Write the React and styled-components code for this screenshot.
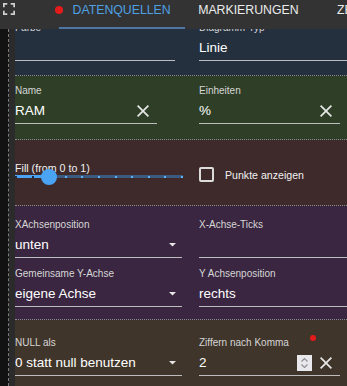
import React, { useLayoutEffect, useRef } from "react";
import styled, { createGlobalStyle } from "styled-components";

const GlobalStyle = createGlobalStyle`
  html, body {
    margin: 0;
    padding: 0;
    background: #121212;
  }
  body {
    font-family: "Liberation Sans", Arial, sans-serif;
    overflow: hidden;
  }
`;

const Screen = styled.div`
  width: 347px;
  height: 386px;
  display: flex;
  flex-direction: column;
  overflow: hidden;
  background: #121212;
`;

const TabBar = styled.div`
  height: 29px;
  flex-shrink: 0;
  display: flex;
  background: #333333;
  white-space: nowrap;
  overflow: hidden;
`;

const FullscreenButton = styled.div`
  width: 59px;
  flex-shrink: 0;
  box-sizing: border-box;
  padding: 3px 0 0 3px;
  color: #d0d0d0;

  svg {
    display: block;
  }
`;

const Tab = styled.div`
  position: relative;
  flex-shrink: 0;
  min-width: 76px;
  box-sizing: border-box;
  padding: 3px 14px 0 13.5px;
  text-align: center;
  font-size: 12.3px;
  line-height: 14px;
  text-transform: uppercase;
  color: ${(p) => (p.$active ? "#4ea1e4" : "#ececec")};
  border-bottom: 2px solid ${(p) => (p.$active ? "#4f75a3" : "transparent")};
`;

const Dot = styled.span`
  position: absolute;
  width: ${(p) => p.$size}px;
  height: ${(p) => p.$size}px;
  border-radius: 50%;
  background: #e41b1b;
  left: ${(p) => p.$left}px;
  top: ${(p) => p.$top}px;
`;

const Body = styled.div`
  flex: 1;
  min-height: 0;
  display: flex;
`;

const Gutter = styled.div`
  width: 8px;
  flex-shrink: 0;
  background: #121212;
  border-right: 1px dashed #7c7c7c;
`;

const Rail = styled.div`
  width: 6px;
  flex-shrink: 0;
  background: #2b2b2b;
`;

const Scroller = styled.div`
  flex: 1;
  min-width: 0;
  overflow: hidden;
`;

const Section = styled.div`
  display: grid;
  grid-template-columns: 184px 1fr;
  row-gap: ${(p) => p.$gap || 0}px;
  padding: ${(p) => p.$pt}px 0 ${(p) => p.$pb}px;
  background: ${(p) => p.$bg};
  border-bottom: 1px dotted #8a8a8a;
`;

const Field = styled.div`
  position: relative;
  width: ${(p) => (p.$w ? `${p.$w}px` : "100%")};
  display: flex;
  flex-direction: column;
`;

const Label = styled.div`
  font-size: 10px;
  line-height: 13px;
  color: #d6d6d6;
  margin-bottom: 4px;
  white-space: nowrap;
`;

const InputRow = styled.div`
  display: flex;
  align-items: center;
  height: 20px;
  padding-bottom: 2px;
  border-bottom: 1px solid #bdbdbd;
`;

const Value = styled.div`
  flex: 1;
  font-size: 13.5px;
  line-height: 20px;
  color: #ffffff;
  white-space: nowrap;
`;

const Adornment = styled.span`
  display: flex;
  align-items: center;
  margin-right: ${(p) => p.$mr}px;
  color: #e6e6e6;

  svg {
    display: block;
  }
`;

const Spinner = styled.span`
  width: 15px;
  height: 16px;
  background: #e9e9ed;
  display: flex;
  align-items: center;
  justify-content: center;
  margin-right: 8px;
`;

const SliderBox = styled.div`
  width: 168px;
`;

const SliderLabel = styled.div`
  font-size: 10.7px;
  line-height: 12px;
  margin-top: 1px;
  color: #f0f0f0;
  white-space: nowrap;
`;

const Track = styled.div`
  position: relative;
  height: 3px;
  margin-top: 1px;
  background: #3b5a80;
`;

const TrackFill = styled.div`
  position: absolute;
  left: 0;
  top: 0;
  bottom: 0;
  background: #4aa4f3;
`;

const Marks = styled.div`
  position: absolute;
  inset: 0;
  display: flex;
  justify-content: space-between;
  align-items: center;
`;

const Mark = styled.span`
  width: 2px;
  height: 2px;
  background: ${(p) => (p.$on ? "#1b2f4a" : "#5fb0f5")};
`;

const Thumb = styled.span`
  position: absolute;
  top: 50%;
  width: 16px;
  height: 16px;
  margin: -8px 0 0 -8px;
  border-radius: 50%;
  background: #4aa4f3;
  z-index: 1;
`;

const CheckRow = styled.label`
  display: flex;
  align-items: center;
  margin-top: 6px;
  align-self: start;
`;

const Box = styled.span`
  width: 15px;
  height: 15px;
  box-sizing: border-box;
  border: 2px solid #dcdcdc;
  border-radius: 2px;
`;

const CheckText = styled.span`
  margin-left: 11px;
  font-size: 10.6px;
  color: #f0f0f0;
`;

const CloseIcon = () => (
  <svg width="12" height="12" viewBox="5 5 14 14" fill="currentColor">
    <path d="M19 6.41 17.59 5 12 10.59 6.41 5 5 6.41 10.59 12 5 17.59 6.41 19 12 13.41 17.59 19 19 17.59 13.41 12z" />
  </svg>
);

const DropIcon = () => (
  <svg width="7" height="3.5" viewBox="7 10 10 5" fill="currentColor">
    <path d="M7 10l5 5 5-5z" />
  </svg>
);

const FullscreenIcon = () => (
  <svg width="12" height="12" viewBox="5 5 14 14" fill="currentColor">
    <path d="M7 14H5v5h5v-2H7v-3zm-2-4h2V7h3V5H5v5zm12 7h-3v2h5v-5h-2v3zM14 5v2h3v3h2V5h-5z" />
  </svg>
);

const SpinIcon = () => (
  <svg width="9" height="12" viewBox="0 0 9 12" fill="none" stroke="#8c8c90" strokeWidth="1.1">
    <polyline points="1.5,4.5 4.5,1.5 7.5,4.5" />
    <polyline points="1.5,7.5 4.5,10.5 7.5,7.5" />
  </svg>
);

const TextField = ({ label, value, w, clear, select, spin, badge }) => (
  <Field $w={w}>
    <Label>{label}</Label>
    {badge && <Dot $size={6} $left={111} $top={-1} />}
    <InputRow>
      <Value>{value}</Value>
      {spin && (
        <Spinner>
          <SpinIcon />
        </Spinner>
      )}
      {clear && (
        <Adornment $mr={8}>
          <CloseIcon />
        </Adornment>
      )}
      {select && (
        <Adornment $mr={6}>
          <DropIcon />
        </Adornment>
      )}
    </InputRow>
  </Field>
);

const Slider = ({ label, value }) => {
  const pct = value * 100;
  const marks = Array.from({ length: 11 }, (_, i) => i / 10);
  return (
    <SliderBox>
      <SliderLabel>{label}</SliderLabel>
      <Track>
        <TrackFill style={{ width: `${pct}%` }} />
        <Marks>
          {marks.map((m) => (
            <Mark key={m} $on={m < value} />
          ))}
        </Marks>
        <Thumb style={{ left: `${pct}%` }} />
      </Track>
    </SliderBox>
  );
};

const App = () => {
  const scroller = useRef(null);

  useLayoutEffect(() => {
    if (scroller.current) scroller.current.scrollTop = 16;
  }, []);

  return (
    <>
      <GlobalStyle />
      <Screen>
        <TabBar>
          <FullscreenButton>
            <FullscreenIcon />
          </FullscreenButton>
          <Tab $active>
            <Dot $size={8} $left={-4} $top={6} />
            Datenquellen
          </Tab>
          <Tab>Markierungen</Tab>
          <Tab>Zeit</Tab>
        </TabBar>
        <Body>
          <Gutter />
          <Rail />
          <Scroller ref={scroller}>
            <Section $bg="#25303f" $pt={8} $pb={14}>
              <TextField label="Farbe" value="" w={160} />
              <TextField label="Diagramm-Typ" value="Linie" />
            </Section>
            <Section $bg="#2f3f27" $pt={8} $pb={15}>
              <TextField label="Name" value="RAM" w={142} clear />
              <TextField label="Einheiten" value="%" w={141} clear />
            </Section>
            <Section $bg="#3e2a2a" $pt={21} $pb={23}>
              <Slider label="Fill (from 0 to 1)" value={0.2} />
              <CheckRow>
                <Box />
                <CheckText>Punkte anzeigen</CheckText>
              </CheckRow>
            </Section>
            <Section $bg="#3a2640" $pt={12} $pb={12} $gap={9}>
              <TextField label="XAchsenposition" value="unten" w={167} select />
              <TextField label="X-Achse-Ticks" value="" />
              <TextField label="Gemeinsame Y-Achse" value="eigene Achse" w={167} select />
              <TextField label="Y Achsenposition" value="rechts" />
            </Section>
            <Section $bg="#40352a" $pt={16} $pb={24}>
              <TextField label="NULL als" value="0 statt null benutzen" w={167} select />
              <TextField label="Ziffern nach Komma" value="2" w={141} spin clear badge />
            </Section>
          </Scroller>
        </Body>
      </Screen>
    </>
  );
};

export default App;
